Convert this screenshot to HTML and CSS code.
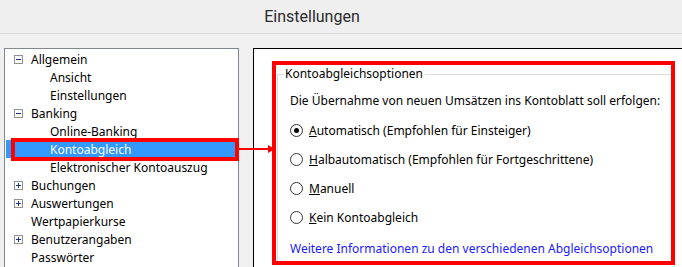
FILE: index.html
```html
<!DOCTYPE html>
<html lang="de">
<head>
<meta charset="utf-8">
<title>Einstellungen</title>
<link rel="stylesheet" href="styles.css">
</head>
<body>
<header class="titlebar">Einstellungen</header>
<main class="content">
  <nav class="tree">
    <div class="node"><span class="exp minus"></span><span class="label">Allgemein</span></div>
    <div class="node child"><span class="label">Ansicht</span></div>
    <div class="node child"><span class="label">Einstellungen</span></div>
    <div class="node"><span class="exp minus"></span><span class="label">Banking</span></div>
    <div class="node child"><span class="label">Online-Banking</span></div>
    <div class="node child selected"><span class="label">Kontoabgleich</span><span class="mark"></span><span class="arrow"></span></div>
    <div class="node child"><span class="label">Elektronischer Kontoauszug</span></div>
    <div class="node"><span class="exp plus"></span><span class="label">Buchungen</span></div>
    <div class="node"><span class="exp plus"></span><span class="label">Auswertungen</span></div>
    <div class="node leaf"><span class="label">Wertpapierkurse</span></div>
    <div class="node"><span class="exp plus"></span><span class="label">Benutzerangaben</span></div>
    <div class="node leaf"><span class="label">Passwörter</span></div>
  </nav>
  <section class="page">
    <div class="highlight">
      <fieldset class="group">
        <legend class="legend">Kontoabgleichsoptionen</legend>
        <p class="intro">Die Übernahme von neuen Umsätzen ins Kontoblatt soll erfolgen:</p>
        <label class="radio"><span class="dot checked"></span><span><u>A</u>utomatisch (Empfohlen für Einsteiger)</span></label>
        <label class="radio"><span class="dot"></span><span><u>H</u>albautomatisch (Empfohlen für Fortgeschrittene)</span></label>
        <label class="radio"><span class="dot"></span><span><u>M</u>anuell</span></label>
        <label class="radio"><span class="dot"></span><span><u>K</u>ein Kontoabgleich</span></label>
        <a class="more" href="#">Weitere Informationen zu den verschiedenen Abgleichsoptionen</a>
      </fieldset>
    </div>
  </section>
</main>
</body>
</html>
```
FILE: styles.css
```css
html, body {
  margin: 0;
  padding: 0;
  background: #f0f0f0;
  overflow: hidden;
  height: 267px;
}
body {
  font-family: "Noto Sans", "DejaVu Sans", sans-serif;
  font-size: 12px;
  color: #000;
}
.titlebar {
  height: 34px;
  box-sizing: border-box;
  border-bottom: 1px solid #dadada;
  background: #efefef;
  text-align: center;
  font-family: Roboto, "Open Sans", sans-serif;
  font-size: 16px;
  line-height: 33px;
  color: #2b2b2b;
  padding-right: 58px;
}
.content {
  display: flex;
  gap: 14px;
  padding: 14px 0 0 4px;
  align-items: flex-start;
}
.tree {
  width: 235px;
  flex: none;
  box-sizing: border-box;
  height: 240px;
  background: #fff;
  border: 1px solid #828790;
  padding: 1px 0 0 1px;
}
.node {
  position: relative;
  display: flex;
  align-items: center;
  height: 18px;
  padding-left: 8px;
}
.node.child { padding-left: 44px; }
.node.leaf { padding-left: 25px; }
.exp {
  width: 9px;
  height: 9px;
  box-sizing: border-box;
  border: 1px solid #919191;
  margin-right: 8px;
  position: relative;
  background: #fff;
}
.exp::before {
  content: "";
  position: absolute;
  left: 1px;
  top: 3px;
  width: 5px;
  height: 1px;
  background: #1e3287;
}
.exp.plus::after {
  content: "";
  position: absolute;
  left: 3px;
  top: 1px;
  width: 1px;
  height: 5px;
  background: #1e3287;
}
.selected {
  background: #3399ff;
  color: #fff;
}
.mark {
  position: absolute;
  left: 5px;
  top: -2px;
  width: 228px;
  height: 23px;
  box-sizing: border-box;
  border: 4px solid #f00;
}
.arrow {
  position: absolute;
  left: 233px;
  top: 8px;
  width: 30px;
  height: 2px;
  background: #f00;
}
.arrow::after {
  content: "";
  position: absolute;
  right: -6px;
  top: -3px;
  border-left: 7px solid #f00;
  border-top: 4px solid transparent;
  border-bottom: 4px solid transparent;
}
.page {
  flex: 1;
  height: 240px;
  background: #fff;
  border: 1px solid #000;
  border-right: none;
  padding: 12px 7px 0 18px;
}
.highlight {
  border: 4px solid #f00;
  height: 196px;
  overflow: hidden;
}
.group {
  margin: 2px -4px 0 1px;
  padding: 0 0 0 12px;
  border: 1px solid #dcdcdc;
  height: 220px;
}
.legend {
  padding: 0 2px;
  margin-left: -7px;
  line-height: 14px;
}
.intro {
  margin: 12px 0 0 0;
  line-height: 16px;
}
.radio {
  display: flex;
  align-items: center;
  height: 16px;
  margin-top: 13px;
}
.dot {
  width: 13px;
  height: 13px;
  box-sizing: border-box;
  border: 1px solid #333;
  border-radius: 50%;
  margin-right: 6px;
  position: relative;
  background: #fff;
}
.dot.checked::after {
  content: "";
  position: absolute;
  left: 3px;
  top: 3px;
  width: 5px;
  height: 5px;
  border-radius: 50%;
  background: #000;
}
.radio u { text-decoration-thickness: 1px; }
.more {
  display: block;
  margin-top: 16px;
  color: #1a1aff;
  text-decoration: none;
  line-height: 16px;
}
```
